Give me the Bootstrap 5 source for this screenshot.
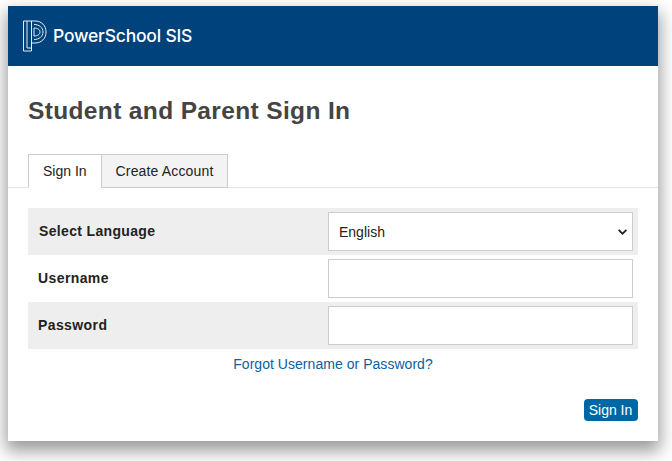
<!DOCTYPE html>
<html lang="en">
<head>
  <meta charset="UTF-8">
  <title>Student and Parent Sign In</title>
  <link href="https://cdn.jsdelivr.net/npm/bootstrap@5.3.3/dist/css/bootstrap.min.css" rel="stylesheet">
  <style>
    html, body { height: 100%; overflow: hidden; }
    body { background: #fff; font-family: "Liberation Sans", Arial, sans-serif; font-size: 14px; color: #222; padding: 6px 14px 0 8px; }
    .login-box { width: 650px; height: 435px; background: #fff; box-shadow: 0 8px 16px 2px rgba(0,0,0,.4); }
    .login-head { height: 60px; background: #00427c; padding-left: 15px; color: #fff; }
    .login-head span { font-family: Inter, sans-serif; font-weight: 500; font-size: 17.5px; letter-spacing: -.2px; margin-left: 6px; }
    .login-title { font-size: 24.5px; font-weight: 700; color: #444; margin: 0; padding: 31px 20px 0; line-height: 28px; letter-spacing: .36px; }
    .tab-strip { margin-top: 29px; padding-left: 20px; border-bottom: 1px solid #e3e3e3; height: 34px; }
    .tab-item { height: 34px; padding: 0 14px; line-height: 33px; border: 1px solid #ccc; background: #f3f3f3; color: #222; text-decoration: none; }
    .tab-item.on { background: #fff; border-bottom-color: #fff; }
    .tab-item + .tab-item { margin-left: -1px; letter-spacing: .15px; }
    .login-form { padding: 20px 20px 0; }
    .form-line { height: 47px; padding-left: 10px; padding-right: 5px; }
    .form-line.shade { background: #eee; }
    .form-line label { width: 290px; font-weight: 700; letter-spacing: .4px; margin: 0; }
    .form-line .form-control, .form-line .form-select { width: 305px; height: 39px; border: 1px solid #ccc; border-radius: 0; font-size: 14px; color: #222; padding: 2px 10px 0; }
    .form-line .form-select { background-image: url("data:image/svg+xml,%3csvg xmlns='http://www.w3.org/2000/svg' viewBox='0 0 9 6'%3e%3cpath fill='none' stroke='%23222' stroke-width='1.7' d='M.6.8l3.9 3.9L8.4.8'/%3e%3c/svg%3e"); background-size: 9px 6px; background-position: right 5px center; }
    .form-line label.first-label { padding-left: 1px; letter-spacing: .34px; }
    .forgot { color: #0a5f9e; text-decoration: none; line-height: 30px; height: 30px; letter-spacing: .04px; }
    .submit-line { margin-top: 20px; }
    .btn-signin { width: 54px; background: #0067a5; color: #fff; border: 0; border-radius: 4px; font-size: 14px; line-height: 22px; padding: 0 1px 0 0; }
  </style>
</head>
<body>

<div class="login-box">
  <div class="login-head d-flex align-items-center">
    <svg width="24" height="32" viewBox="0 0 24 32" fill="none" stroke="#fff" stroke-width=".9">
      <path d="M.5 1H12C18.500 1 23 5.500 23 12C23 18.500 18.500 23 12 23H8.500V31H.5Z"/>
      <path d="M4 1V28H8.500V1"/>
      <path d="M11 4.500C16 4.500 20 7.500 20 12C20 16.500 16 19.500 11 19.500"/>
      <path d="M11 8C14.500 8 17 9.500 17 12C17 14.500 14.500 16 11 16Z"/>
    </svg>
    <span>PowerSchool SIS</span>
  </div>

  <h1 class="login-title">Student and Parent Sign In</h1>

  <div class="tab-strip d-flex">
    <a href="#" class="tab-item on">Sign In</a>
    <a href="#" class="tab-item">Create Account</a>
  </div>

  <form class="login-form">
    <div class="form-line shade d-flex align-items-center">
      <label for="language" class="first-label">Select Language</label>
      <select id="language" class="form-select">
        <option>English</option>
      </select>
    </div>
    <div class="form-line d-flex align-items-center">
      <label for="username">Username</label>
      <input type="text" id="username" class="form-control">
    </div>
    <div class="form-line shade d-flex align-items-center">
      <label for="password">Password</label>
      <input type="password" id="password" class="form-control">
    </div>
    <div class="text-center"><a href="#" class="forgot">Forgot Username or Password?</a></div>
    <div class="submit-line d-flex justify-content-end">
      <button type="button" class="btn-signin">Sign In</button>
    </div>
  </form>
</div>

<script src="https://cdn.jsdelivr.net/npm/bootstrap@5.3.3/dist/js/bootstrap.bundle.min.js"></script>
</body>
</html>
